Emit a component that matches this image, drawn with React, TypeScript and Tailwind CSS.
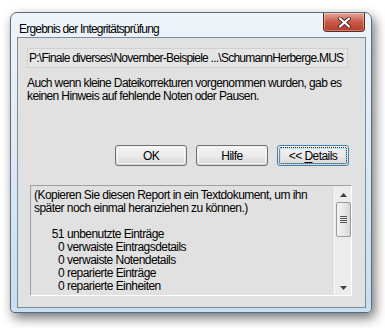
import React from 'react'

const font = { fontFamily: '"Segoe UI", "Liberation Sans", Arial, sans-serif', letterSpacing: '-0.55px' }

function Btn({ label, focus }: { label: React.ReactNode; focus?: boolean }) {
    return (
        <div className={`w-[72px] h-[21px] rounded-[3px] border ${focus ? 'border-[#3c7fb1]' : 'border-[#707070]'} bg-gradient-to-b from-[#f2f2f2] via-[#ebebeb] to-[#d5d5d5] p-[1px]`}>
            <div className={`h-full w-full rounded-[2px] flex items-center justify-center text-[12px] text-black ${focus ? 'border border-dotted border-[#222] shadow-[inset_0_0_0_1px_#bfe6f8]' : 'border border-[#fcfcfc]/70'}`}>
                {label}
            </div>
        </div>
    )
}

export default function App() {
    const lines = [
        ['51', 'unbenutzte Einträge'],
        ['0', 'verwaiste Eintragsdetails'],
        ['0', 'verwaiste Notendetails'],
        ['0', 'reparierte Einträge'],
        ['0', 'reparierte Einheiten'],
    ]
    return (
        <div className="w-[385px] h-[328px] bg-white pl-[10px] pt-[12px]" style={font}>
            <div className="w-[362px] h-[301px] rounded-t-[7px] rounded-b-[4px] border border-[#5d6b78] bg-gradient-to-b from-[#eef4fa] via-[#dde9f4] to-[#c7def2] shadow-[3px_5px_12px_rgba(0,0,0,0.55)] flex flex-col pl-[6px] pr-[5px] pb-[4px]">
                {/* titelleiste */}
                <div className="h-[24px] flex items-start justify-between">
                    <div className="text-[12px] leading-[14px] text-black pt-[9px] pl-[2px] tracking-[-0.8px]">Ergebnis der Integritätsprüfung</div>
                    <div className="w-[42px] h-[19px] mr-[1px] rounded-b-[4px] border border-t-0 border-[#5a2a24] bg-gradient-to-b from-[#e7a597] via-[#c75a4a] to-[#b73a28] flex items-center justify-center shadow-[inset_0_0_0_1px_rgba(255,255,255,0.35)]">
                        <svg width="13" height="11" viewBox="0 0 13 11">
                            <path d="M2 1.5 L11 9.5 M11 1.5 L2 9.5" stroke="#4a2a26" strokeWidth="4" strokeLinecap="round" />
                            <path d="M2 1.5 L11 9.5 M11 1.5 L2 9.5" stroke="#ffffff" strokeWidth="2.2" strokeLinecap="round" />
                        </svg>
                    </div>
                </div>
                {/* client */}
                <div className="flex-1 border border-[#7f8c98] bg-[#e1e1e1] flex flex-col">
                    <div className="mt-[10px] ml-[9px] w-[321px] h-[20px] border border-[#d0d0d0] bg-[#e5e5e5] text-[12px] leading-[18px] pl-[1px] text-black whitespace-nowrap overflow-hidden tracking-[-0.75px]">
                        P:\Finale diverses\November-Beispiele ...\SchumannHerberge.MUS
                    </div>
                    <div className="mt-[9px] ml-[9px] text-[12px] leading-[13px] text-black whitespace-nowrap tracking-[-0.62px]">
                        Auch wenn kleine Dateikorrekturen vorgenommen wurden, gab es<br />
                        keinen Hinweis auf fehlende Noten oder Pausen.
                    </div>
                    <div className="mt-[42px] ml-[97px] flex gap-[9px]">
                        <Btn label="OK" />
                        <Btn label="Hilfe" />
                        <Btn focus label={<span>&lt;&lt; <u className="underline-offset-2">D</u>etails</span>} />
                    </div>
                    <div className="mt-[19px] ml-[12px] w-[322px] h-[111px] border border-[#a0a0a0] border-r-white border-b-white flex">
                        <div className="flex-1 pl-[3px] pt-[3px] text-[12px] leading-[13px] text-black whitespace-nowrap">
                            <div>(Kopieren Sie diesen Report in ein Textdokument, um ihn</div>
                            <div>später noch einmal heranziehen zu können.)</div>
                            <div className="h-[13px]" />
                            {lines.map(([n, t]) => (
                                <div key={t} className="flex">
                                    <span className="w-[33px] text-right pr-[3px]">{n}</span>
                                    <span>{t}</span>
                                </div>
                            ))}
                        </div>
                        <div className="w-[17px] bg-[#ececec] border-l border-[#f7f7f7] flex flex-col items-center pt-[7px] pb-[5px]">
                            <svg width="7" height="4" viewBox="0 0 7 4"><path d="M0 4 L3.5 0 L7 4 Z" fill="#404040" /></svg>
                            <div className="mt-[5px] w-[15px] h-[35px] rounded-[2px] border border-[#9a9a9a] bg-gradient-to-r from-[#f3f3f3] via-[#e8e8e8] to-[#d8d8d8] flex flex-col items-center justify-center gap-[1px]">
                                <div className="w-[7px] h-[1px] bg-[#555]" />
                                <div className="w-[7px] h-[1px] bg-[#555]" />
                                <div className="w-[7px] h-[1px] bg-[#555]" />
                                <div className="w-[7px] h-[1px] bg-[#555]" />
                            </div>
                            <div className="flex-1" />
                            <svg width="7" height="4" viewBox="0 0 7 4"><path d="M0 0 L3.5 4 L7 0 Z" fill="#404040" /></svg>
                        </div>
                    </div>
                </div>
            </div>
        </div>
    )
}
